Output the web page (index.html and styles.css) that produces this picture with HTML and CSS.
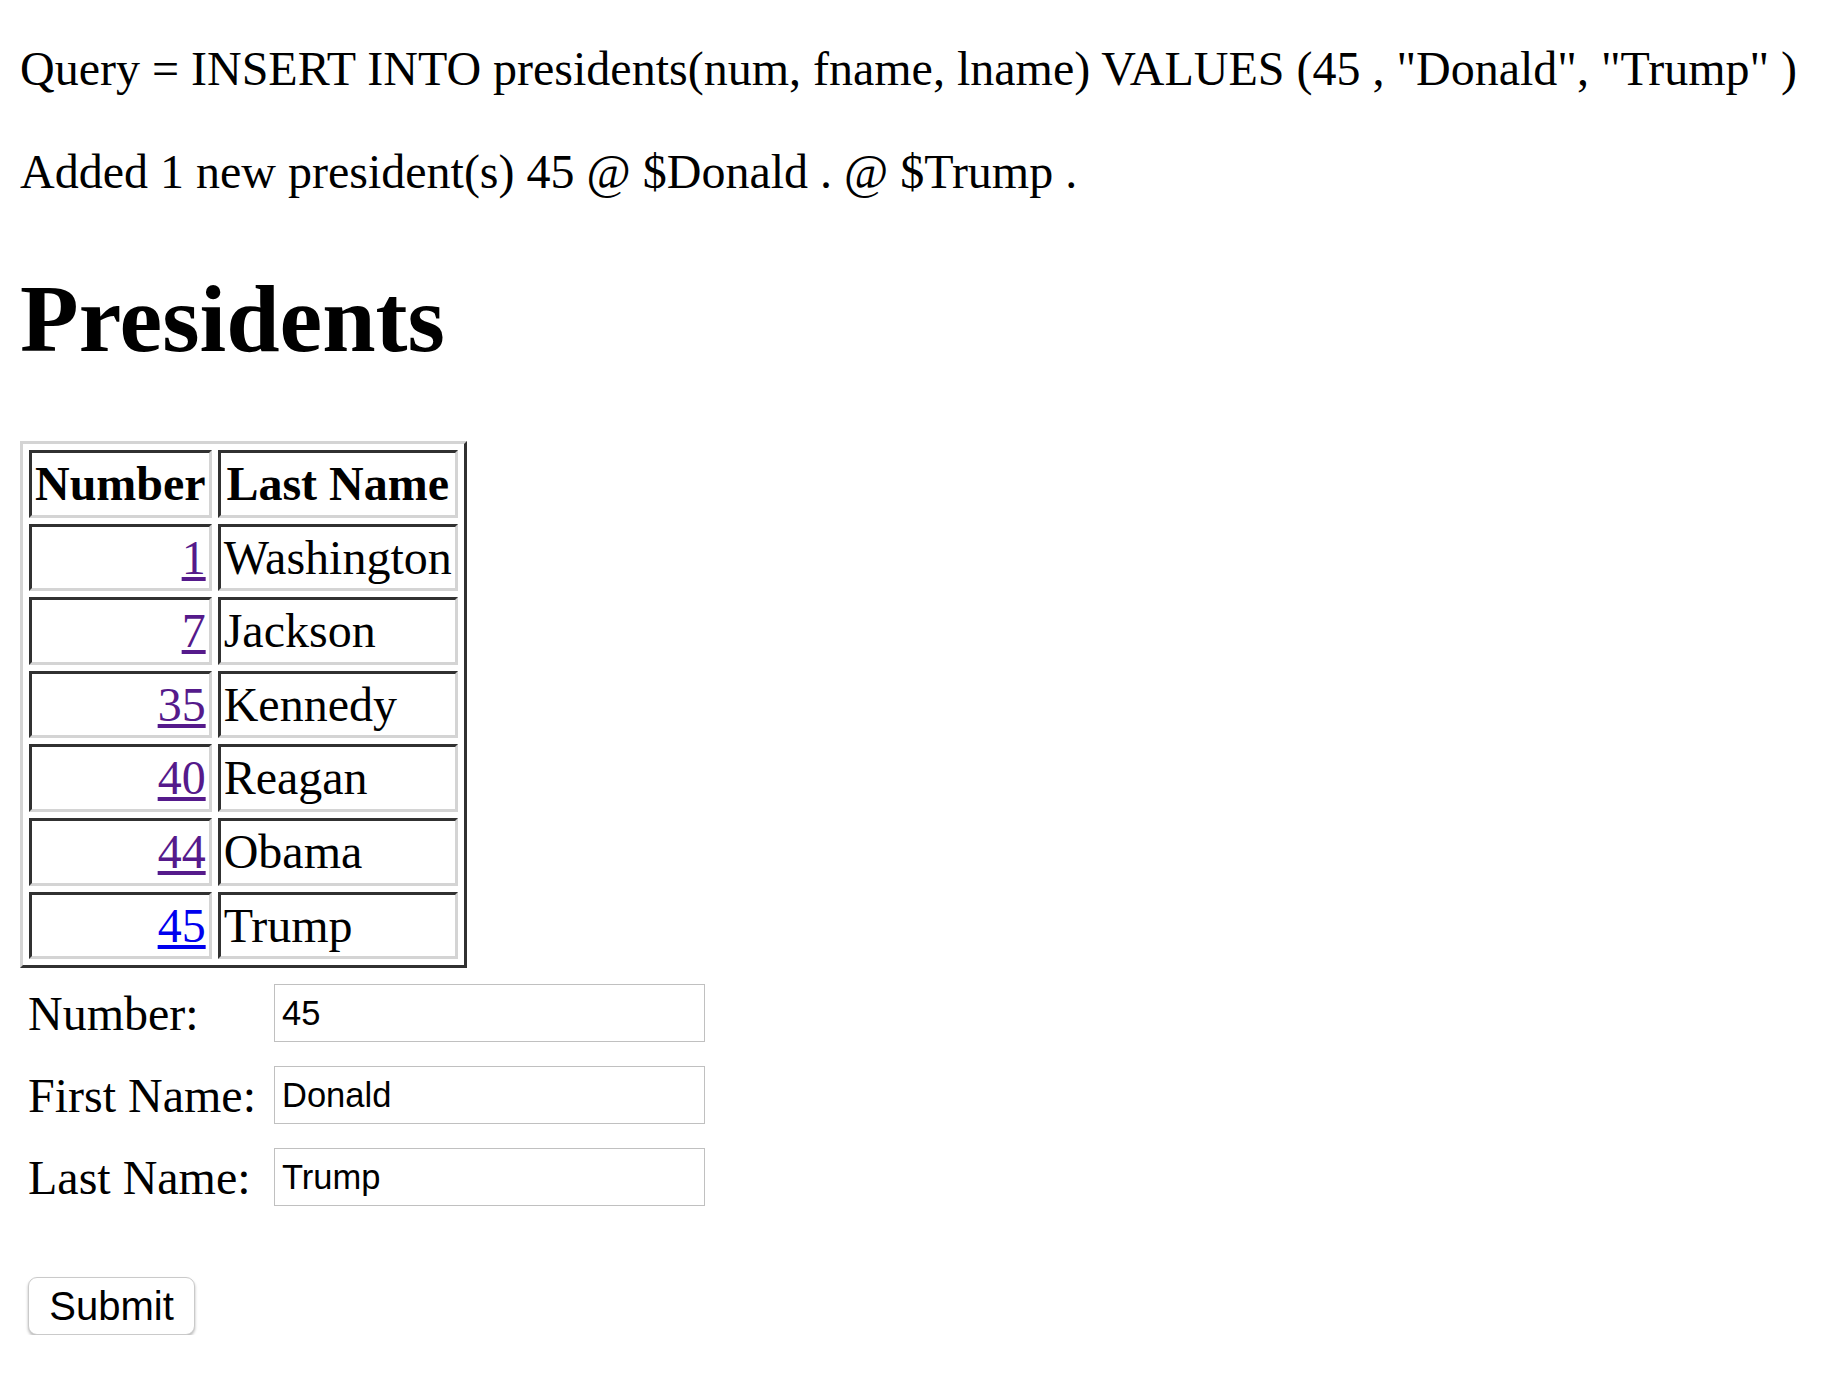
FILE: index.html
```html
<!DOCTYPE html>
<html>
<head>
<meta charset="utf-8">
<title>Presidents</title>
<link rel="stylesheet" href="styles.css">
</head>
<body>
<p class="query">Query = INSERT INTO presidents(num, fname, lname) VALUES (45 , "Donald", "Trump" )</p>
<p>Added 1 new president(s) 45 @ $Donald . @ $Trump .</p>
<h1>Presidents</h1>
<table class="presidents">
  <tr><th>Number</th><th>Last Name</th></tr>
  <tr><td class="num"><a class="visited" href="#">1</a></td><td>Washington</td></tr>
  <tr><td class="num"><a class="visited" href="#">7</a></td><td>Jackson</td></tr>
  <tr><td class="num"><a class="visited" href="#">35</a></td><td>Kennedy</td></tr>
  <tr><td class="num"><a class="visited" href="#">40</a></td><td>Reagan</td></tr>
  <tr><td class="num"><a class="visited" href="#">44</a></td><td>Obama</td></tr>
  <tr><td class="num"><a class="fresh" href="#">45</a></td><td>Trump</td></tr>
</table>
<form class="entry">
  <div class="fields">
    <label class="lbl" for="num">Number:</label>
    <input class="field" id="num" type="text" value="45">
    <label class="lbl" for="fname">First Name:</label>
    <input class="field" id="fname" type="text" value="Donald">
    <label class="lbl" for="lname">Last Name:</label>
    <input class="field" id="lname" type="text" value="Trump">
  </div>
  <button class="submit" type="button">Submit</button>
</form>
</body>
</html>
```
FILE: styles.css
```css
html, body {
  background: #ffffff;
}
body {
  margin: 0 20px;
  font-family: "Liberation Serif", "Times New Roman", serif;
  font-size: 48px;
  color: #000000;
}
p {
  margin: 48px 0;
}
.query {
  margin-top: 41px;
}
h1 {
  font-size: 96px;
  font-weight: bold;
  margin: 64px 0 67px;
}
.presidents {
  border-collapse: separate;
  border-spacing: 6px;
  border-style: solid;
  border-width: 3px;
  border-color: #d4d4d4 #313131 #313131 #d4d4d4;
}
.presidents th,
.presidents td {
  border-style: solid;
  border-width: 3px;
  border-color: #313131 #d4d4d4 #d4d4d4 #313131;
  padding: 3px;
  line-height: 55.6px;
}
.presidents th {
  font-weight: bold;
  text-align: center;
}
.presidents td {
  text-align: left;
}
.presidents td.num {
  text-align: right;
}
.visited {
  color: #551a8b;
  text-decoration: underline;
}
.fresh {
  color: #0000ee;
  text-decoration: underline;
}
.entry {
  margin: 16px 0 0 8px;
}
.fields {
  display: grid;
  grid-template-columns: 246px 431px;
  grid-auto-rows: 58px;
  row-gap: 24px;
  align-items: center;
}
.lbl {
  line-height: 55px;
}
.field {
  box-sizing: border-box;
  width: 431px;
  height: 58px;
  margin: 0;
  padding: 1px 7px 0;
  border: 1px solid #c0c0c0;
  border-radius: 0;
  background: #ffffff;
  font-family: "Liberation Sans", Arial, sans-serif;
  font-size: 34.5px;
  color: #000000;
  outline: none;
}
.submit {
  display: block;
  box-sizing: border-box;
  margin-top: 71px;
  width: 167px;
  height: 58px;
  padding: 0;
  border: 1px solid #cacaca;
  border-radius: 9px;
  background: #ffffff;
  box-shadow: 0 2px 3px rgba(0, 0, 0, 0.28);
  font-family: "Liberation Sans", Arial, sans-serif;
  font-size: 40px;
  color: #000000;
}
```
